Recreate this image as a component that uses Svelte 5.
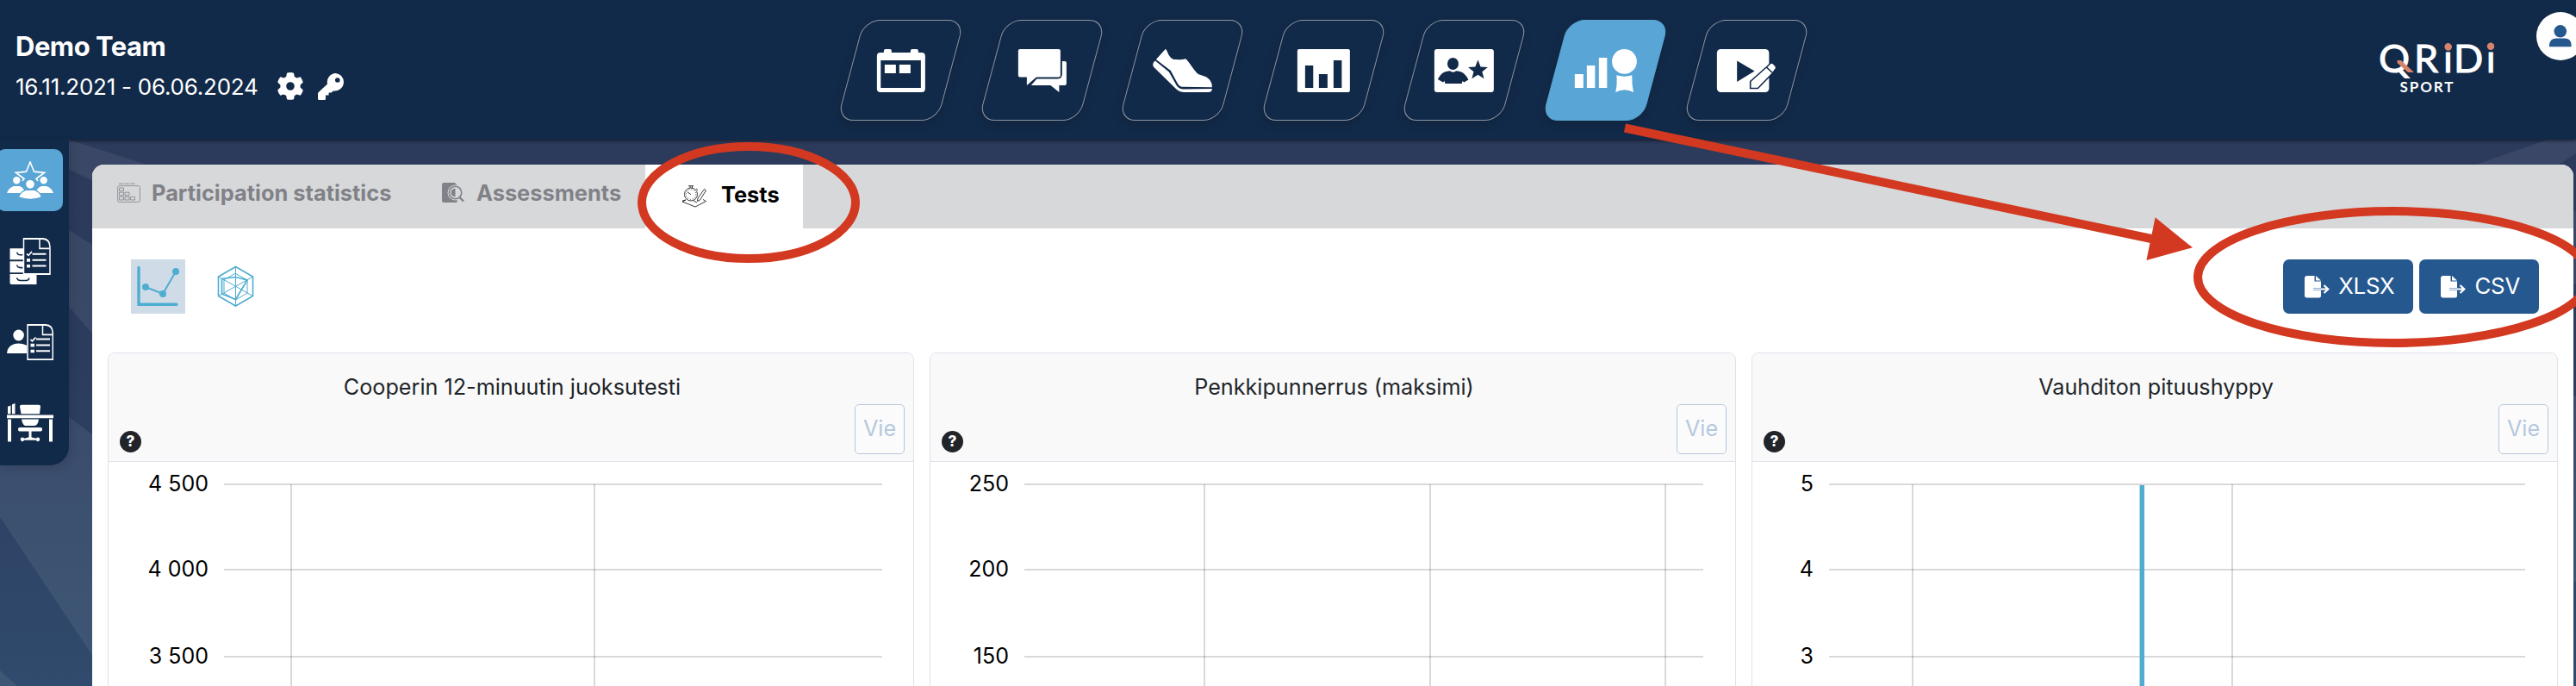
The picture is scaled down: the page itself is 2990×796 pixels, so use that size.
<script lang="ts">
  type Chart = {
    title: string;
    labels: string[];
    labelEnd: number;
    from: number;
    to: number;
    ticks: number[];
    line?: number;
  };

  const navItems = [
    { name: "calendar", width: 56 },
    { name: "messages", width: 56 },
    { name: "shoe", width: 69 },
    { name: "statistics", width: 61 },
    { name: "profile", width: 69 },
    { name: "results", width: 72 },
    { name: "video", width: 69 },
  ];

  const exports = ["XLSX", "CSV"];

  // x values are relative to the left edge of the card
  const charts: Chart[] = [
    {
      title: "Cooperin 12-minuutin juoksutesti",
      labels: ["4 500", "4 000", "3 500"],
      labelEnd: 117,
      from: 135,
      to: 899,
      ticks: [213, 565],
    },
    {
      title: "Penkkipunnerrus (maksimi)",
      labels: ["250", "200", "150"],
      labelEnd: 92,
      from: 110,
      to: 898,
      ticks: [319, 581, 854],
    },
    {
      title: "Vauhditon pituushyppy",
      labels: ["5", "4", "3"],
      labelEnd: 72,
      from: 90,
      to: 898,
      ticks: [187, 558],
      line: 453.3,
    },
  ];

  const rows = [26, 125, 226];
  let activeNav = "results";
  let activeView = "line";
</script>

<div class="app">
  <svg class="backdrop" viewBox="0 0 2990 796" preserveAspectRatio="none">
    <g fill="#fff" fill-opacity="0.07">
      <path d="M80 162 170 191 170 240 80 196.600z" />
      <path d="M80 267 107 284 107 387 80 356z" />
      <path d="M0 434 80 484 107 504 107 760 0 600z" />
      <path d="M0 778 20 796 0 796z" />
      <path d="M2874 191 2957 162 2990 162 2990 178 2970 191z" />
      <path d="M2987 245H2990V330H2987zM2987 460H2990V675H2987z" />
    </g>
  </svg>

  <header class="topbar">
    <div class="team">
      <h1>Demo Team</h1>
      <div class="season">
        <span>16.11.2021 - 06.06.2024</span>
        <svg class="gear" width="30" height="32" viewBox="0 0 30 32">
          <path
            fill-rule="evenodd"
            d="M11 .8Q15-.6 19 .8L19.8 5 22.6 6.6 26.6 5.2Q29 8 29.8 11.6L26.6 14.4V17.6L29.8 20.4Q29 24 26.6 26.8L22.6 25.4 19.8 27 19 31.2Q15 32.4 11 31.2L10.2 27 7.4 25.4 3.4 26.8Q1 24 .2 20.4L3.4 17.6V14.4L.2 11.6Q1 8 3.4 5.2L7.4 6.6 10.2 5zM15 11.2a4.8 4.8 0 1 0 0 9.6 4.8 4.8 0 0 0 0-9.6z"
          />
        </svg>
        <svg width="31" height="31" viewBox="0 0 31 31">
          <path
            fill-rule="evenodd"
            d="M20.5 0A10.3 10.3 0 1 1 17.8 20.4L15.6 22.6H12.6V25.6H9V29.5Q9 31 7.5 31H1.5Q0 31 0 29.5V23.8Q0 22.8.8 22L11 12.4A10.3 10.3 0 0 1 20.5 0zM22.8 5.2a2.8 2.8 0 1 0 0 5.6 2.8 2.8 0 0 0 0-5.6z"
          />
        </svg>
      </div>
    </div>

    <nav class="main-nav">
      {#each navItems as item (item.name)}
        <button
          class="nav-item"
          class:active={activeNav === item.name}
          aria-label={item.name}
          on:click={() => (activeNav = item.name)}
        >
          <svg width={item.width} height="50" viewBox="0 0 {item.width} 50">
            {#if item.name === "calendar"}
              <path
                fill-rule="evenodd"
                d="M8 4V2Q8 0 10 0H15Q17 0 17 2V4H39V2Q39 0 41 0H46Q48 0 48 2V4H52Q56 4 56 8V46Q56 50 52 50H4Q0 50 0 46V8Q0 4 4 4zM4.4 13V45H51V13z"
              />
              <path d="M9 18H22V28H9zM26 18H39V28H26z" />
            {:else if item.name === "messages"}
              <path d="M2 0H47Q49 0 49 2V30.5Q49 32.5 47 32.5H21L10 42V32.5H2Q0 32.5 0 30.5V2Q0 0 2 0z" />
              <path d="M51 14H54Q56 14 56 16V40Q56 42 54 42H47.5V50L37.5 42H15L21.5 34.5H45Q51 34.5 51 29z" />
            {:else if item.name === "shoe"}
              <path d="M14.8 0Q16 0 17 3C20 11 24 12.3 27 12Q34 12.5 38 11.3 39 11.5 41 14C45 19 50 27 53 29 58 31 63 31.500 66.500 36Q69 39 69 44.300L34 43.700Q30.500 43 28.500 39L21 25 4 12z" />
              <path d="M3 13.500 19 26.500 28 42.500Q31 46.300 36 46.500L69 46Q69 50 64.500 50H37Q31 50 27 46L1 20.500Q-1 16.500 3 13.500z" />
            {:else if item.name === "statistics"}
              <rect width="61" height="50" rx="2" />
              <path class="hole" d="M9 19H18.400V45H9zM25 29H35V45H25zM42 13H51.500V45H42z" />
            {:else if item.name === "profile"}
              <rect width="69" height="50" rx="3" />
              <g class="hole">
                <ellipse cx="21.600" cy="17" rx="6.500" ry="7" />
                <path d="M4 35Q8 27 13.500 26L18 25.300Q21.600 28 25.500 25.300L30 26Q36 28 39.600 35.500L34.500 38.500 32.500 37 32 40H12.500L12 37 10 38.500z" />
                <path d="M50.600 12.500 53.700 20.600 62 21 55.500 26.200 57.700 34.200 50.600 29.700 43.500 34.200 45.700 26.200 39.200 21 47.500 20.600z" />
              </g>
            {:else if item.name === "results"}
              <path d="M0 29H10V45H0zM14 19H23.500V45H14zM28 10H37.500V45H28z" />
              <circle cx="57.600" cy="14.400" r="14.400" />
              <path d="M48.500 30.300Q57.600 33 66.500 30.300Q66 41 68.200 50Q58 44.500 47.300 50Q49.500 41 48.500 30.300z" />
            {:else}
              <rect width="60.500" height="50" rx="4.500" />
              <path class="hole" d="M23.300 13.500 43.700 25.500 23.300 38z" />
              <path
                class="pencil"
                d="M38.800 37.500 58.500 20 62 16.500Q63.500 15 65.500 16.800L68 19.500Q69.500 21.500 68 23.300L65 27.500 47.500 45.500H38.800zM57.500 21 64.500 27.500"
              />
            {/if}
          </svg>
        </button>
      {/each}
    </nav>

    <div class="brand">
      <svg width="134" height="60" viewBox="0 0 134 60">
        <text class="wordmark" x="-1 40 74 86 123.800" y="35">QRiDi</text>
        <path class="accent" d="M20.500 21H25L40 35H33L20.500 24z" />
        <circle class="accent" cx="79.700" cy="5.500" r="4.200" />
        <circle class="accent" cx="129" cy="4.700" r="4.200" />
        <text class="sport" x="23.500" y="57.500" textLength="62">SPORT</text>
      </svg>
      <button class="avatar" aria-label="account">
        <svg width="26" height="26" viewBox="0 0 26 26">
          <circle cx="12.800" cy="7.300" r="7.300" />
          <path d="M0 25.300V23Q1 15.600 8 15.600H18Q25 15.600 25.600 23V25.300z" />
        </svg>
      </button>
    </div>
  </header>

  <div class="body">
    <aside class="sidebar">
      <button class="side-item active" aria-label="team">
        <svg width="54" height="44.500" viewBox="0 0 54 36" preserveAspectRatio="none">
          <path class="outline" d="M18 18.500 20 16.500 10.500 10.800 22.500 9.800 27 .8 31.500 9.800 43.500 10.800 34 16.500 36 18.500" />
          <path d="M0 30Q2 25 8 23.500H15Q20 25 21 30zM33 30Q35 25 40 23.500H46Q52 25 54 30z" />
          <g class="cut">
            <ellipse cx="11.300" cy="18" rx="4.800" ry="4" />
            <ellipse cx="42.700" cy="18" rx="4.800" ry="4" />
            <path d="M13.500 34Q15 29 22 27H32Q39 29 40.500 34Q27 38 13.500 34z" />
            <ellipse cx="27" cy="21.700" rx="5.400" ry="4.600" />
          </g>
        </svg>
      </button>
      <button class="side-item" aria-label="archive">
        <svg width="54" height="54.400" viewBox="-3.500 0 54 44" preserveAspectRatio="none">
          <path d="M0 10H31V20.500H0zM0 22H31V32.500H0zM0 34H31V44H1.500L0 42.500z" />
          <path class="groove" d="M8 13.500Q9 16 12 16H15M8 25.500Q9 28 12 28H15M8 37.500Q9 40 12 40H19Q22 40 22.500 37.500" />
          <path class="sheet" d="M16 .8H38Q46.500 1 46.500 9V34H16z" />
          <path class="outline" d="M34.500 1V10H46M19.500 15 21.500 16.500 25.500 13" />
          <path d="M26 14.300H42V16H26zM19.500 19.500H23.500V22.500H19.500zM26 20H42V21.700H26zM19.500 25H23.500V28H19.500zM26 25.500H42V27.200H26z" />
        </svg>
      </button>
      <button class="side-item" aria-label="members">
        <svg width="54" height="42" viewBox="0 0 54 34" preserveAspectRatio="none">
          <ellipse cx="13.600" cy="10.500" rx="6.300" ry="5.200" />
          <path d="M0 27.500Q0 21 9 18.600Q16 17.500 23 20V27.500z" />
          <path class="sheet" d="M24 .8H45Q53.300 1 53.300 9V33.300H24z" />
          <path class="outline" d="M41.500 1V10H53M27.500 14.500 29.500 16 33.500 12.500" />
          <path d="M34 13.300H50V15H34zM27.500 18.500H32V21.500H27.500zM34 19H50V20.700H34zM27.500 24H32V27H27.500zM34 24.500H50V26.200H34z" />
        </svg>
      </button>
      <button class="side-item" aria-label="desk">
        <svg width="54" height="44.500" viewBox="0 0 54 36" preserveAspectRatio="none">
          <path d="M1 3 4.500 2V10H1zM6 1 9.500 0V10H6zM15 3Q15 1.500 17 1.500H37Q39 1.500 39 3L38 10H16.500z" />
          <path d="M0 11H54V14H0zM1 15H5V36H1zM49 15H53V36H49zM17 15H37Q36 21 32 21H21Q18 20 17 15zM25.500 25H28.500V33H25.500z" />
          <rect x="13" y="22.700" width="28" height="3.600" rx="1.800" />
          <path d="M20 33 27 31.500 34 33V34.500H20z" />
          <ellipse cx="18" cy="33.800" rx="2.200" ry="1.900" />
          <ellipse cx="36" cy="33.800" rx="2.200" ry="1.900" />
        </svg>
      </button>
    </aside>

    <main class="panel">
      <div class="tabs">
        <button class="tab participation">
          <svg width="27" height="23" viewBox="0 0 27 23">
            <rect class="thin" x=".6" y="3.600" width="25.800" height="18.800" rx="2" />
            <path class="thin" d="M2 1.200H21" stroke-dasharray="5.500 1" stroke-width="2" />
            <path class="thin" d="M2.500 6H7.500V9.500H2.500zM2.500 11.200H7.500V14.700H2.500zM2.500 16.400H7.500V20H2.500zM9 11.200H14V14.700H9zM9 16.400H14V20H9zM15.500 16.400H20.500V20H15.500z" />
          </svg>
          Participation statistics
        </button>
        <button class="tab assessments">
          <svg width="26" height="24" viewBox="0 0 26 24">
            <path d="M2 0H15L17.500 3V23H2Q0 23 0 21V2Q0 0 2 0z" />
            <circle class="lens-gap" cx="15.500" cy="11.500" r="9" />
            <circle class="lens" cx="15.500" cy="11.500" r="7.200" />
            <path d="M15.500 6.500V16.500Q10.500 15.500 10.500 11.500T15.500 6.500z" />
            <path class="handle" d="M20.500 17 25 21.500" />
          </svg>
          Assessments
        </button>
        <button class="tab tests selected">
          <svg width="29" height="26" viewBox="0 0 29 26">
            <circle cx="11" cy="10.500" r="7.500" />
            <circle cx="11" cy="10.500" r="5.800" stroke-dasharray="1 2" />
            <path d="M8 .7H14M10 1V3M12.500 1V3M7 8 11 10.700M17 4 19 5.500M26.500 4.500 28.500 6 21.500 17 18.500 18.500 19 15zM5 17 1 19 16 25 28.500 18.500 25 16.500M5 17 1 18M14 18 18 20" />
          </svg>
          Tests
        </button>
      </div>

      <div class="toolbar">
        <div class="views">
          <button
            class="view"
            class:on={activeView === "line"}
            aria-label="line chart"
            on:click={() => (activeView = "line")}
          >
            <svg width="63" height="63" viewBox="0 0 63 63">
              <path d="M9 9.500V52.300H53" stroke-width="3.400" />
              <path d="M17 32 37 40 52 14" stroke-width="2" />
              <g fill="#4eadd1" stroke="none">
                <circle cx="17" cy="32" r="4" />
                <circle cx="37" cy="40" r="4" />
                <circle cx="52" cy="14" r="4" />
              </g>
            </svg>
          </button>
          <button
            class="view"
            class:on={activeView === "radar"}
            aria-label="radar chart"
            on:click={() => (activeView = "radar")}
          >
            <svg width="63" height="63" viewBox="0 0 63 63">
              <path d="M31.500 8.500 51.500 20V42.500L31.500 54 11.500 42.500V20z" stroke-width="1.600" />
              <path d="M31.500 16.500 45 24V39L31.500 47 18 39V24zM31.500 8.500V54M11.500 20 51.500 42.500M51.500 20 11.500 42.500" stroke-width="1" />
              <path d="M15.500 22.500 31.500 20.500 45 24 31.500 46.500 15.500 40z" stroke-width="1.700" />
            </svg>
          </button>
        </div>
        <div class="export-buttons">
          {#each exports as format}
            <button class="export">
              <svg width="29" height="26" viewBox="0 0 29 26">
                <path d="M3 0H11.500V6.500H19V14H10V17H19V23Q19 25.500 16.500 25.500H3Q0 25.500 0 23V3Q0 0 3 0zM13 0 19 5.500H13z" />
                <path class="arrow" d="M10 15.500H27M22.500 11 27.300 15.500 22.500 20" />
              </svg>
              <span>{format}</span>
            </button>
          {/each}
        </div>
      </div>

      <div class="cards">
        {#each charts as chart}
          <section class="card">
            <div class="card-header">
              <h2>{chart.title}</h2>
              <div class="card-actions">
                <span class="help">?</span>
                <button class="vie" disabled>Vie</button>
              </div>
            </div>
            <svg class="chart" width="934" height="270" viewBox="1 0 934 270">
              {#each rows as y, i}
                <line class="grid" x1={chart.from} x2={chart.to} y1={y} y2={y} />
                <text x={chart.labelEnd} y={y + 8}>{chart.labels[i]}</text>
              {/each}
              {#each chart.ticks as x}
                <line class="grid" x1={x} x2={x} y1="26" y2="270" />
              {/each}
              {#if chart.line}
                <line class="series" x1={chart.line} x2={chart.line} y1="27" y2="270" />
              {/if}
            </svg>
          </section>
        {/each}
      </div>
    </main>
  </div>

  <svg class="marks" viewBox="0 0 2990 796">
    <ellipse cx="869" cy="235" rx="124" ry="65" />
    <ellipse cx="2778" cy="321.500" rx="227" ry="76.500" />
    <path d="M1886 148.500 2497 277" />
    <path class="tip" d="M2501.600 252.300 2545 287.300 2491.400 302z" />
  </svg>
</div>

<style>
  :global(body) {
    margin: 0;
    overflow: hidden;
  }

  .app {
    --navy: #122a49;
    --light-blue: #59a5d5;
    --blue: #265890;
    --grey: #808288;
    --line: #dfe1eb;
    --red: #d23920;
    position: relative;
    width: 2990px;
    height: 796px;
    overflow: hidden;
    font-family: Inter, "Liberation Sans", sans-serif;
    font-size: 26px;
    background: linear-gradient(#2c3a5b 162px, #2c3c5e 420px, #304b6d 796px);
  }

  button {
    font: inherit;
    padding: 0;
    border: none;
    background: none;
    cursor: pointer;
  }

  svg {
    display: block;
    flex: none;
  }

  .backdrop,
  .marks {
    position: absolute;
    inset: 0;
    width: 2990px;
    height: 796px;
  }

  .marks {
    pointer-events: none;
    fill: none;
    stroke: var(--red);
    stroke-width: 10;
  }

  .marks .tip {
    fill: var(--red);
    stroke: none;
  }

  .topbar {
    position: relative;
    display: flex;
    height: 162px;
    background: var(--navy);
    color: white;
    box-shadow: 0 1px 4px rgba(0, 0, 0, 0.6);
  }

  .team {
    box-sizing: border-box;
    width: 987px;
    padding: 35px 0 0 18px;
  }

  .team h1 {
    margin: 0;
    font-size: 31px;
    line-height: 38px;
    font-weight: 700;
    letter-spacing: -0.5px;
  }

  .season {
    display: flex;
    align-items: center;
    height: 32px;
    margin-top: 11px;
    fill: white;
  }

  .season span {
    width: 282px;
    letter-spacing: -0.24px;
    white-space: nowrap;
  }

  .gear {
    margin: 0 17px 0 22px;
  }

  .main-nav {
    display: flex;
    gap: 46.6px;
    padding-top: 23px;
  }

  .nav-item {
    box-sizing: border-box;
    display: flex;
    align-items: center;
    justify-content: center;
    width: 117px;
    height: 117px;
    border: 1px solid #8d95a3;
    border-radius: 19px;
    transform: skewX(-15deg);
    box-shadow: 0 4px 10px rgba(0, 0, 0, 0.16);
    fill: white;
  }

  .nav-item svg {
    transform: skewX(15deg);
    overflow: visible;
  }

  .nav-item.active {
    background: var(--light-blue);
    border-color: var(--light-blue);
  }

  .hole {
    fill: var(--navy);
  }

  .pencil {
    stroke: var(--navy);
    stroke-width: 1.6;
  }

  .brand {
    display: flex;
    flex: 1;
    justify-content: flex-end;
    margin-right: -10px;
  }

  .brand > svg {
    margin: 49px 48px 0 0;
    overflow: visible;
  }

  .wordmark {
    font: 400 45px Lato, sans-serif;
    fill: white;
    stroke: white;
    stroke-width: 1;
  }

  .sport {
    font: 700 17px Lato, sans-serif;
    fill: white;
  }

  .accent {
    fill: #d9836c;
  }

  .avatar {
    display: flex;
    flex: none;
    align-items: center;
    justify-content: center;
    width: 56px;
    height: 56px;
    margin-top: 14px;
    border-radius: 50%;
    background: white;
    fill: var(--blue);
  }

  .body {
    position: relative;
    display: flex;
    align-items: flex-start;
  }

  .sidebar {
    box-sizing: border-box;
    width: 80px;
    height: 378px;
    padding-top: 11px;
    border-radius: 0 0 22px 0;
    background: var(--navy);
    box-shadow: 3px 3px 12px rgba(0, 0, 0, 0.12);
  }

  .side-item {
    display: flex;
    align-items: center;
    width: 77px;
    height: 72px;
    margin: 0 0 21.8px -4px;
    padding-left: 12px;
    box-sizing: border-box;
    border-radius: 10px;
    fill: white;
  }

  .side-item.active {
    background: var(--light-blue);
  }

  .outline {
    fill: none;
    stroke: white;
    stroke-width: 1.5;
  }

  .cut {
    stroke: var(--light-blue);
    stroke-width: 1.2;
  }

  .groove {
    fill: none;
    stroke: var(--navy);
    stroke-width: 1.3;
  }

  .sheet {
    fill: var(--navy);
    stroke: white;
    stroke-width: 1.5;
  }

  .panel {
    width: 2880px;
    height: 620px;
    margin: 29px 0 0 27px;
    border-radius: 14px 14px 0 0;
    overflow: hidden;
    background: white;
  }

  .tabs {
    display: flex;
    height: 74px;
    background: #d7d8da;
  }

  .tab {
    display: flex;
    align-items: center;
    box-sizing: border-box;
    height: 74px;
    padding-bottom: 9px;
    font-size: 25.4px;
    font-weight: 700;
    color: var(--grey);
    fill: var(--grey);
    white-space: nowrap;
  }

  .participation {
    width: 376px;
    padding-left: 29px;
    gap: 13px;
  }

  .assessments {
    width: 266px;
    padding-left: 30px;
    gap: 14px;
  }

  .tests {
    width: 183px;
    padding: 0 0 5px 42px;
    gap: 17px;
  }

  .selected {
    color: black;
    background: white;
  }

  .thin {
    fill: none;
    stroke: var(--grey);
    stroke-width: 0.8;
  }

  .tests svg {
    fill: none;
    stroke: #222;
    stroke-width: 0.9;
    margin-top: 5px;
  }

  .lens-gap {
    fill: #d7d8da;
  }

  .lens {
    fill: none;
    stroke: var(--grey);
    stroke-width: 1.6;
  }

  .handle {
    stroke: var(--grey);
    stroke-width: 2.4;
  }

  .toolbar {
    display: flex;
    justify-content: space-between;
    padding: 36px 40px 45px 45px;
  }

  .views {
    display: flex;
    gap: 27px;
  }

  .view {
    width: 63px;
    height: 63px;
    fill: none;
    stroke: #4eadd1;
    stroke-linecap: round;
  }

  .view.on {
    background: #cfdce8;
  }

  .export-buttons {
    display: flex;
    gap: 7px;
  }

  .export {
    display: flex;
    align-items: center;
    gap: 10px;
    height: 63px;
    padding: 0 22px 0 25px;
    border-radius: 7px;
    background: var(--blue);
    color: white;
    fill: white;
  }

  .export span {
    margin-top: -2px;
    font-size: 25.8px;
    letter-spacing: -0.2px;
  }

  .arrow {
    fill: none;
    stroke: white;
    stroke-width: 2.2;
  }

  .cards {
    display: flex;
    gap: 18px;
    padding-left: 18px;
  }

  .card {
    box-sizing: border-box;
    width: 936px;
    height: 420px;
    border: 1px solid var(--line);
    border-radius: 8px;
    overflow: hidden;
  }

  .card-header {
    box-sizing: border-box;
    height: 126px;
    padding: 21px 10px 8px 13px;
    border-bottom: 1px solid var(--line);
    background: #f9f9f9;
  }

  .card h2 {
    margin: 0 0 2px;
    font-size: 25.2px;
    font-weight: 400;
    line-height: 36px;
    text-align: center;
    color: #212529;
  }

  .card-actions {
    display: flex;
    justify-content: space-between;
    align-items: flex-end;
  }

  .help {
    width: 25px;
    height: 25px;
    margin-bottom: 2px;
    border-radius: 50%;
    background: #212529;
    color: white;
    font-size: 17px;
    font-weight: 800;
    line-height: 25px;
    text-align: center;
  }

  .vie {
    box-sizing: border-box;
    width: 58px;
    height: 58px;
    padding-bottom: 2px;
    border: 1px solid #b5c8de;
    border-radius: 5px;
    background: #fbfbfb;
    color: #b5c8de;
    font-size: 25.2px;
  }

  .chart text {
    font-size: 25px;
    text-anchor: end;
    fill: black;
  }

  .grid {
    stroke: rgba(0, 0, 0, 0.15);
    stroke-width: 2;
  }

  .series {
    stroke: #4eadd1;
    stroke-width: 5.5;
  }
</style>
